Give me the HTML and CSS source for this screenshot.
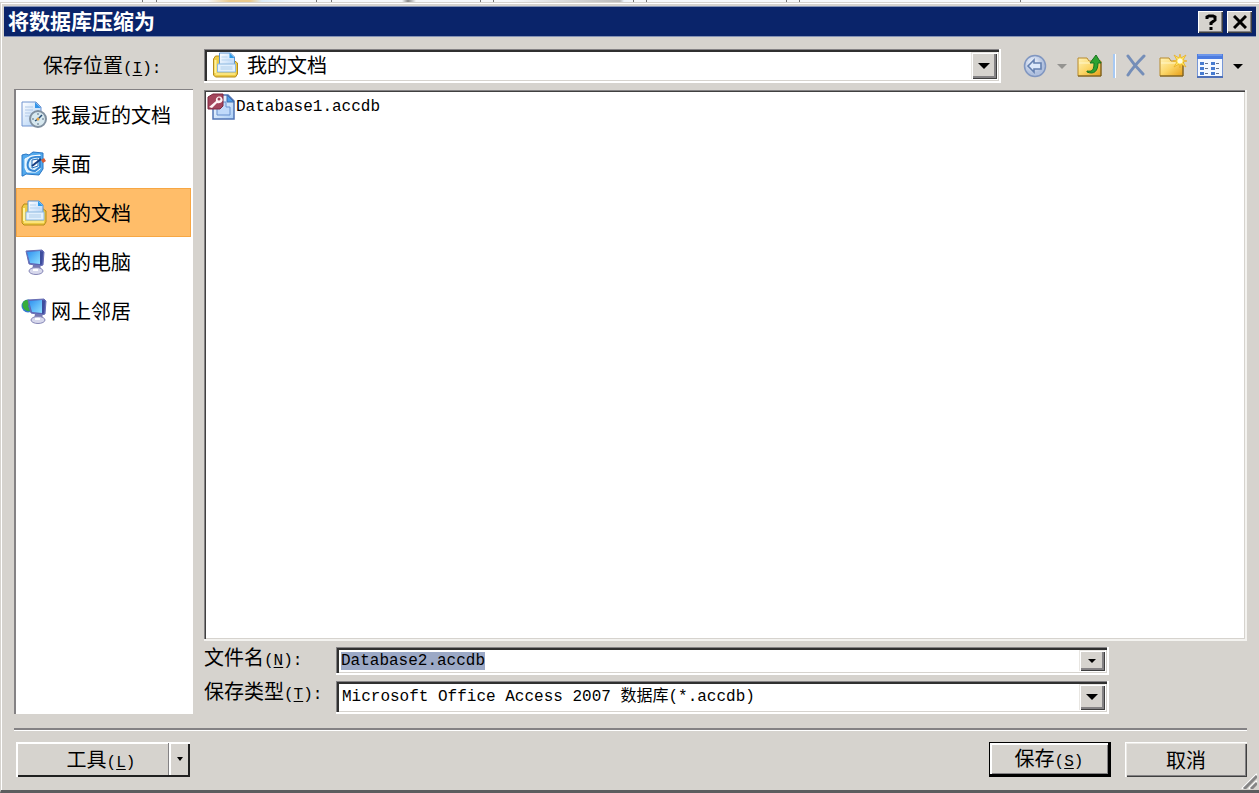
FILE: index.html
```html
<!DOCTYPE html>
<html lang="zh-CN">
<head>
<meta charset="utf-8">
<title>将数据库压缩为</title>
<link rel="stylesheet" href="styles.css">
</head>
<body>
<svg class="defs" aria-hidden="true">
  <defs>
    <linearGradient id="gold" x1="0" y1="0" x2="1" y2="1"><stop offset="0" stop-color="#fff3b8"/><stop offset=".5" stop-color="#fbd668"/><stop offset="1" stop-color="#e79d15"/></linearGradient>
    <linearGradient id="paper" x1="0" y1="0" x2="1" y2="1"><stop offset="0" stop-color="#fff"/><stop offset="1" stop-color="#a9cdf5"/></linearGradient>
    <linearGradient id="screen" x1="0" y1="0" x2="1" y2="1"><stop offset="0" stop-color="#2c8ff0"/><stop offset="1" stop-color="#8fe0ff"/></linearGradient>
    <radialGradient id="orb" cx=".4" cy=".35"><stop offset="0" stop-color="#f4f8ff"/><stop offset="1" stop-color="#b0c0de"/></radialGradient>
    <symbol id="docs" viewBox="0 0 26 26">
      <path d="M1 7 3 4h6v4h12l4 3v11l-2 3H3l-2-2z" fill="#edcb45" stroke="#b58b18"/>
      <path d="M3 8v13" stroke="#fff3a0" stroke-width="2"/>
      <path d="M7 1h11l4 4v14H7z" fill="url(#paper)" stroke="#5c93cf"/>
      <path d="M17 1v5h5z" fill="#2d9be8"/>
      <path d="M9 5h6M9 8h10" stroke="#b5d4ef"/>
      <path d="M5 12h18v8H5z" fill="#e2f0fd" stroke="#8db8df"/>
      <path d="M8 15h12M8 17h12" stroke="#aecde9"/>
      <path d="M3 22h20" stroke="#fbe47c" stroke-width="2"/>
    </symbol>
    <symbol id="pc" viewBox="0 0 20 26">
      <path d="m1 2 16-1 2 2-1 13-3 1-11-2z" fill="#5a62b4" stroke="#6970b5"/>
      <path d="m2 3 13-1v13l-10-1z" fill="url(#screen)"/>
      <path d="m15 2 3 1-1 12-2 1z" fill="#3d4d9d"/>
      <path d="M8 16h7l1 5H7z" fill="#7477b2"/>
      <ellipse cx="11" cy="22" rx="7" ry="3.500" fill="#d7d8ec" stroke="#8586b6"/>
      <path d="M8 21h5" stroke="#fff" stroke-width="2"/>
    </symbol>
    <symbol id="folder" viewBox="0 0 26 24">
      <path d="M1 4h9l2 3h12v15H1z" fill="url(#gold)" stroke="#b88a2c"/>
      <path d="M2 9h21" stroke="#fff6c8"/>
      <path d="M1 22h23V8" fill="none" stroke="#6d541f"/>
    </symbol>
  </defs>
</svg>
<div class="backdrop"></div>
<main class="dialog">
  <header class="titlebar">
    <h1 class="title">将数据库压缩为</h1>
    <button class="caption-btn" aria-label="帮助"><svg width="14" height="16" viewBox="0 0 14 16"><path d="M3 5V3l2-1h4l2 1v3L7 9v2M7 13v3" fill="none" stroke="#000" stroke-width="3"/></svg></button>
    <button class="caption-btn" aria-label="关闭"><svg width="14" height="14" viewBox="0 0 14 14"><path d="m1 1 12 12M13 1 1 13" stroke="#000" stroke-width="3"/></svg></button>
  </header>
  <div class="content">
    <label class="look-label" for="location">保存位置<span class="key">(<u>I</u>):</span></label>
    <div class="look-row">
      <div class="field look-field">
        <svg class="field-icon" width="27" height="26"><use href="#docs"/></svg>
        <select id="location" class="control"><option>我的文档</option></select>
        <span class="drop"><i class="arrow"></i></span>
      </div>
      <div class="toolbar">
        <button class="tool" aria-label="后退"><svg width="24" height="24" viewBox="0 0 24 24"><circle cx="12" cy="12" r="10.5" fill="url(#orb)" stroke="#8096c0" stroke-width="1.5"/><path d="m5 12 6-6v3h7v6h-7v3z" fill="#dce8fa" stroke="#6480b0" stroke-width="1.6"/></svg></button>
        <button class="tool" aria-label="后退列表"><i class="arrow muted"></i></button>
        <button class="tool" aria-label="向上一级"><svg width="26" height="24" viewBox="0 0 26 24"><use href="#folder"/><path d="M10 17c6 1 7-2 7-8h-4l6-8 5 8h-3c0 8-4 12-11 9z" fill="#2ea331" stroke="#17741d"/></svg></button>
        <span class="tool-sep"></span>
        <button class="tool" aria-label="删除"><svg width="24" height="24" viewBox="0 0 24 24"><path d="M3 2c4 6 9 12 15 18M19 2C13 8 8 13 3 21" fill="none" stroke="#758eb8" stroke-width="3" stroke-linecap="round"/></svg></button>
        <button class="tool" aria-label="新建文件夹"><svg width="28" height="24" viewBox="0 0 28 24"><svg width="26" height="24"><use href="#folder"/></svg><path d="m21 0 1 4 5-3-3 5 4 1-4 1 3 5-5-3-1 4-1-4-5 3 3-5-4-1 4-1-3-5 5 3z" fill="#ffe75c" stroke="#e8ae28" stroke-width=".8"/><circle cx="21" cy="7" r="2.500" fill="#fffbe0"/></svg></button>
        <button class="tool" aria-label="视图"><svg width="26" height="24" viewBox="0 0 26 24"><path d="M.5.5h25v22H.5z" fill="#f5f9ff" stroke="#7696d6"/><path d="M0 0h26v5H0z" fill="#4d7ce0"/><path d="M1 1h24" stroke="#8fb1f4"/><path d="M3 8h4v3H3zm0 5h4v3H3zm0 5h4v3H3zm11-10h4v3h-4zm0 5h4v3h-4zm0 5h4v3h-4z" fill="#477bd0"/><path d="M8 9.500h3m-3 5h3m-3 5h3m8-10h3m-3 5h3m-3 5h3" stroke="#69768e"/><path d="M0 23h26" stroke="#4e70b8" stroke-width="2"/></svg></button>
        <button class="tool" aria-label="视图列表"><i class="arrow"></i></button>
      </div>
    </div>
    <nav class="places">
      <button class="place"><svg width="26" height="27" viewBox="0 0 26 27"><path d="M1 1h14l5 5v19H1z" fill="url(#paper)" stroke="#7194cf"/><path d="M14 1v6h6z" fill="#3595e9"/><path d="M4 6h8M4 9h8M4 12h6M4 15h4" stroke="#b1c8e7"/><circle cx="17" cy="18" r="8" fill="#d7e8ef" stroke="#8090a0" stroke-width="2"/><path d="M17 12v2M17 22v2M11 18h2M21 18h2" stroke="#586f85"/><path d="m17 18 4-4M17 18l-3 2" stroke="#274e76" stroke-width="1.500"/><circle cx="17" cy="18" r="1.500" fill="#e6a443"/></svg>我最近的文档</button>
      <button class="place"><svg width="26" height="26" viewBox="0 0 26 26"><path d="m1 4 4-1 3 1 4-3 10 1v16l-4 6-13-1-3 2H1z" fill="#53a9ed" stroke="#2876c4"/><path d="m4 8 6-3 9-1v14l-4 3H6l-2-4z" fill="#d9f0ff" stroke="#fff"/><path d="M8 9c3-4 11-3 11-3v10l-5 4c-7 0-9-5-6-11z" fill="none" stroke="#3687d3" stroke-width="2"/><path d="m11 9 6-1v7l-6 2z" fill="#fff" stroke="#236eb9"/><path d="m11 15 9-7" stroke="#173e80" stroke-width="2"/><path d="m20 9 3-2 2 3-3 2z" fill="#d75b35"/></svg>桌面</button>
      <button class="place selected" aria-current="true"><svg width="26" height="26"><use href="#docs"/></svg>我的文档</button>
      <button class="place"><svg width="26" height="26" viewBox="0 0 26 26"><svg x="4" width="20" height="26"><use href="#pc"/></svg></svg>我的电脑</button>
      <button class="place"><svg width="26" height="26" viewBox="0 0 26 26"><circle cx="7" cy="8" r="6.500" fill="#3579d4"/><path d="M2 4c4-4 8-2 8 1L7 8l2 5c-5 1-9-4-7-9z" fill="#37ad3c"/><svg x="6" width="20" height="26"><use href="#pc"/></svg></svg>网上邻居</button>
    </nav>
    <div class="main">
      <div class="files">
        <button class="file"><svg width="28" height="27" viewBox="0 0 28 27"><path d="M8 2h13l6 6v18H6V3z" fill="url(#paper)" stroke="#5275b5" stroke-width="1.500"/><path d="M20 2v7h7z" fill="#4b9be8" stroke="#416dad"/><path d="M10 14h5V9h4v5h4v8H10z" fill="#c0dafa" stroke="#6790cf"/><path d="m1 4 5-3h10v12l-3 3H1z" fill="#a4455c" stroke="#7c2941"/><path d="m2 14 7-6c-1-4 4-6 6-3s-1 6-5 5l-5 5z" fill="#fff3f4"/><circle cx="12" cy="6" r="1.500" fill="#994059"/></svg>Database1.accdb</button>
      </div>
      <div class="form-row">
        <label for="filename">文件名<span class="key">(<u>N</u>):</span></label>
        <div class="field name-field">
          <input id="filename" class="control" type="text" value="Database2.accdb">
          <button class="drop" aria-label="文件名列表"><i class="arrow small"></i></button>
        </div>
      </div>
      <div class="form-row">
        <label for="filetype">保存类型<span class="key">(<u>T</u>):</span></label>
        <div class="field type-field">
          <select id="filetype" class="control"><option>Microsoft Office Access 2007 数据库(*.accdb)</option></select>
          <span class="drop"><i class="arrow"></i></span>
        </div>
      </div>
    </div>
  </div>
  <footer class="footer">
    <div class="split">
      <button class="split-main">工具<span class="key">(<u>L</u>)</span></button>
      <button class="split-drop" aria-label="工具列表"><i class="arrow tiny"></i></button>
    </div>
    <button class="btn default">保存<span class="key">(<u>S</u>)</span></button>
    <button class="btn">取消</button>
  </footer>
  <svg class="grip" width="16" height="16" viewBox="0 0 16 16"><path d="M1 16 16 1M8 16l8-8" stroke="#fff" stroke-width="2"/><path d="M3 16 16 3M10 16l6-6" stroke="#858585" stroke-width="3"/></svg>
</main>
<script src="main.js"></script>
</body>
</html>
```
FILE: styles.css
```css
* { box-sizing: border-box; }
body {
  margin: 0;
  height: 100vh;
  display: flex;
  flex-direction: column;
  overflow: hidden;
  background: #d6d3ce;
  color: #000;
  font: 20px/20px "Noto Sans CJK SC", sans-serif;
}
button, input, select {
  margin: 0;
  padding: 0;
  border: 0;
  border-radius: 0;
  background: none;
  color: inherit;
  font: inherit;
}
svg { display: block; flex: none; }
label { white-space: nowrap; }
.defs { position: absolute; width: 0; height: 0; }
.key, .file, .name-field, #filetype {
  font-family: "Liberation Mono", "Noto Sans CJK SC", monospace;
  font-size: 16px;
}
.key { line-height: 16px; }
u { text-underline-offset: 2px; }

.backdrop {
  height: 2px;
  flex: none;
  background:
    linear-gradient(90deg, #fff0 0 142px, #777 142px 143px, #fff0 143px 156px, #777 156px 157px, #fff0 157px 208px, #e9c98c 230px, #e9c98c 250px, #dcecf8 262px, #fff0 300px 316px, #777 316px 317px, #fff0 317px 331px, #777 331px 332px, #fff0 332px 402px, #888 408px, #fff0 416px 480px, #777 480px 481px, #fff0 481px 493px, #777 493px 494px, #fff0 494px 510px, #bbb 620px, #eef5fb 624px, #fff0 633px, #777 633px 634px, #fff0 634px 646px, #777 646px 647px, #fff0 647px 786px, #777 786px 787px, #fff0 787px 799px, #777 799px 800px, #fff0 800px 1020px, #777 1020px 1021px, #fff0 1021px),
    #f6f8fa;
}
.dialog {
  position: relative;
  flex: 1;
  min-height: 0;
  display: flex;
  flex-direction: column;
  padding: 3px 3px 0 2px;
  border: solid #d6d3ce;
  border-width: 1px 0 3px 1px;
  border-bottom-color: #5c5d5f;
  box-shadow: inset 1px 1px #fff;
}
.titlebar {
  flex: none;
  display: flex;
  align-items: center;
  gap: 4px;
  height: 31px;
  margin-left: 1px;
  padding: 0 4px;
  border: 1px solid #8492b5;
  border-width: 1px 0;
  background: #0a246a;
}
.title {
  flex: 1;
  margin: 0 0 3px;
  color: #fff;
  font-size: 21px;
  font-weight: bold;
  line-height: 26px;
}
.caption-btn {
  display: grid;
  place-items: center;
  width: 25px;
  height: 22px;
  background: #d6d3ce;
  box-shadow: inset 1px 1px #fff, inset -1px -1px #404040, inset -2px -2px #848284;
}

.content {
  flex: 1;
  min-height: 0;
  display: grid;
  grid-template: 34px minmax(0, 1fr) / 179px minmax(0, 1fr);
  gap: 6px 11px;
  padding: 12px 9px 0 11px;
}
.look-label { padding: 6px 0 0 29px; }
.look-row { display: flex; min-width: 0; }
.field {
  display: flex;
  align-items: center;
  min-width: 0;
  background: #fff;
  padding: 3px;
  border: solid #fff;
  border-width: 0 2px 2px 0;
  box-shadow: inset 1px 1px #848284, inset 3px 3px #303030, inset -1px -1px #d6d3ce;
}
.look-field { flex: 1; }
.field-icon { margin: 0 8px 0 5px; }
.control {
  flex: 1;
  min-width: 0;
  height: 100%;
  appearance: none;
  outline: 0;
}
.look-field .control { line-height: 26px; }
.drop {
  flex: none;
  display: grid;
  place-items: center;
  align-self: stretch;
  width: 26px;
  margin: 0 -1px -1px 0;
  background: #d6d3ce;
  pointer-events: none;
  box-shadow: inset 1px 1px #e8e6e2, inset 2px 2px #fff, inset -1px -1px #404040, inset -3px -3px #848284;
}
button.drop { pointer-events: auto; }
.arrow {
  border: solid transparent;
  border-width: 6px 6px 0;
  border-top-color: #000;
}
.arrow.small { border-width: 4px 4px 0; }
.arrow.tiny { border-width: 4px 3px 0; }
.arrow.muted { border-top-color: #949390; }

.toolbar {
  display: flex;
  align-items: center;
  gap: 10px;
  padding: 0 4px 0 22px;
}
.tool { display: grid; place-items: center; }
.tool .arrow { border-width: 5px 5px 0; }
.tool-sep { width: 2px; height: 24px; background: #a7c9f3; box-shadow: 1px 0 #fff; }

.places {
  display: flex;
  flex-direction: column;
  background: #fff;
  border: solid #848284;
  border-width: 1px 0 0 2px;
  padding-right: 2px;
}
.place {
  display: flex;
  align-items: center;
  gap: 4px;
  height: 49px;
  padding: 0 4px;
  border: 1px solid transparent;
  white-space: nowrap;
}
.place.selected { background: #ffbd69; border-color: #f7a744; }

.main {
  display: flex;
  flex-direction: column;
  gap: 6px;
  min-width: 0;
  padding-top: 1px;
}
.files {
  flex: 1;
  min-height: 0;
  padding: 3px;
  background: #fff;
  border: solid #f4f3f0;
  border-width: 0 2px 2px 0;
  box-shadow: inset 1px 1px #848284, inset 2px 2px #404040, inset -1px -1px #d6d3ce;
}
.file {
  display: flex;
  align-items: center;
  gap: 1px;
}
.form-row {
  display: grid;
  grid-template-columns: 132px minmax(0, 1fr);
  align-items: start;
  padding-right: 138px;
}
.name-field { height: 28px; }
.type-field { height: 33px; }
.name-field .control { padding: 1px 0 0 2px; }
.type-field .control { padding-left: 3px; }
#filename::selection { background: #9ca9c6; color: #000; }

.footer {
  flex: none;
  display: flex;
  gap: 14px;
  margin: 14px 9px 0 11px;
  padding: 12px 0 13px;
  border-top: 2px solid #848284;
  box-shadow: inset 0 1px #fff;
}
.btn, .split { height: 35px; }
.btn {
  width: 122px;
  box-shadow: inset 1px 1px #fff, inset 2px 2px #ebe9e5, inset -1px -1px #404040, inset -2px -2px #848284;
}
.btn.default {
  border: solid #000;
  border-width: 1px 3px 3px 1px;
  box-shadow: inset 2px 2px #fff, inset -1px -1px #848284;
}
.split {
  display: flex;
  width: 174px;
  margin: 0 auto 0 2px;
  box-shadow: inset 2px 2px #fff, inset -2px -2px #202020;
}
.split-main { flex: 1; padding-left: 18px; }
.split-drop {
  display: grid;
  place-items: center;
  width: 22px;
  margin: 1px 0 2px;
  border-left: 1px solid #848284;
  box-shadow: inset 2px 0 #fff;
}
.grip { position: absolute; right: 2px; bottom: 1px; }
```
FILE: main.js
```js
const nameBox = document.getElementById("filename");
nameBox.focus();
nameBox.select();
```
